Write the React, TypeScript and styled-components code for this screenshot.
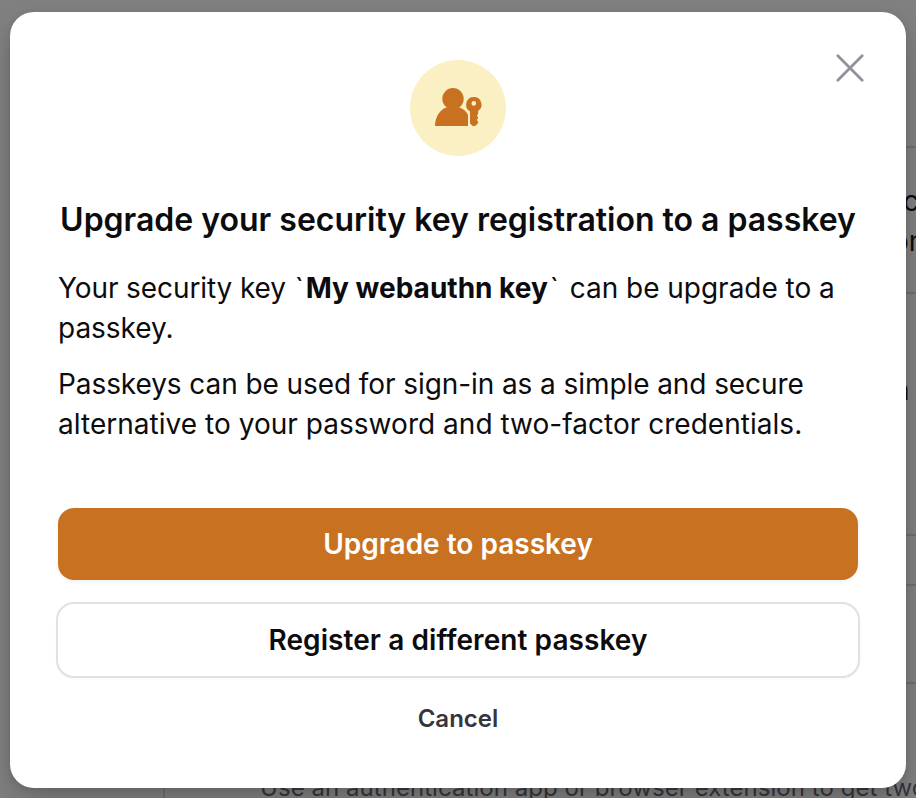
import React from "react";
import styled, { createGlobalStyle } from "styled-components";

const GlobalStyle = createGlobalStyle`
  *, *::before, *::after { box-sizing: border-box; }
  body { margin: 0; font-family: Inter, sans-serif; color: #0c0c0e; -webkit-font-smoothing: antialiased; }
`;

const Screen = styled.div`
  position: relative;
  width: 916px;
  height: 798px;
  overflow: hidden;
  background: #808080;
`;

const SettingsPage = styled.div`
  display: flex;
  flex-direction: column;
  margin-left: 163px;
`;

const SettingsRow = styled.div<{ $height: number; $inset: number }>`
  height: ${(p) => p.$height}px;
  padding-top: ${(p) => p.$inset}px;
  border-bottom: 2px solid #707070;
  display: flex;
  flex-direction: column;
`;

const RowText = styled.span<{ $start: number }>`
  height: 40px;
  margin-left: ${(p) => p.$start}px;
  font-size: 28px;
  line-height: 40px;
  white-space: nowrap;
`;

const AppRow = styled.div`
  height: 114px;
  padding: 84px 0 0 95px;
  border-left: 2px solid #707070;
`;

const AppText = styled.p`
  margin: 0;
  font-size: 24px;
  line-height: 40px;
  letter-spacing: 0.05px;
  color: #35353b;
  white-space: nowrap;
`;

const Overlay = styled.div`
  position: absolute;
  inset: 0;
  padding: 12px 10px 10px;
`;

const Dialog = styled.section`
  position: relative;
  height: 776px;
  padding: 48px;
  border-radius: 24px;
  background: #fff;
  box-shadow: 0 16px 32px rgba(0, 0, 0, 0.16), 0 2px 8px rgba(0, 0, 0, 0.12);
  display: flex;
  flex-direction: column;
`;

const CloseButton = styled.button`
  position: absolute;
  top: 40px;
  right: 40px;
  width: 32px;
  height: 32px;
  padding: 0;
  border: 0;
  background: none;
  svg { display: block; }
`;

const IconCircle = styled.div`
  align-self: center;
  width: 96px;
  height: 96px;
  border-radius: 50%;
  background: #fbf0c3;
  svg { display: block; }
`;

const Title = styled.h1`
  margin: 40px 0 0;
  font-size: 32px;
  line-height: 48px;
  font-weight: 600;
  letter-spacing: -0.01px;
  text-align: center;
  white-space: nowrap;
`;

const Body = styled.div`
  margin-top: 24px;
  display: flex;
  flex-direction: column;
  gap: 16px;
`;

const Paragraph = styled.p`
  margin: 0;
  font-size: 28px;
  line-height: 40px;
`;

const Phrase = styled.span<{ $tracking: number }>`
  letter-spacing: ${(p) => p.$tracking}px;
`;

const KeyName = styled.b`
  margin: 0 2px;
  font-weight: 700;
`;

const Quoted = styled.span`
  margin: 0 3px 0 1px;
`;

const Actions = styled.div`
  margin-top: 64px;
  display: flex;
  flex-direction: column;
`;

const Button = styled.button<{ $primary?: boolean }>`
  height: ${(p) => (p.$primary ? 72 : 76)}px;
  margin: ${(p) => (p.$primary ? "0 0 22px" : "0 -2px")};
  padding: 0;
  border: ${(p) => (p.$primary ? "0" : "2px solid #e1e1e1")};
  border-radius: ${(p) => (p.$primary ? 16 : 18)}px;
  background: ${(p) => (p.$primary ? "#c87121" : "#fff")};
  color: ${(p) => (p.$primary ? "#fff" : "#0c0c0e")};
  box-shadow: ${(p) => (p.$primary ? "0 2px 4px rgba(0, 0, 0, 0.05)" : "0 1px 2px rgba(0, 0, 0, 0.04)")};
  font: 600 28px/40px Inter, sans-serif;
  letter-spacing: ${(p) => (p.$primary ? 0 : 0.07)}px;
`;

const CancelButton = styled.button`
  align-self: center;
  margin-top: 21px;
  padding: 0;
  border: 0;
  background: none;
  color: #35353d;
  font: 600 24px/40px Inter, sans-serif;
`;

function PersonKeyIcon() {
  return (
    <svg width="96" height="96" viewBox="0 0 96 96" fill="#c87121">
      <circle cx="43" cy="38.7" r="10.7" />
      <path d="M37 47.3 C30 49.5 25 57 25 66 H58 V54.8 C56 51.2 52.8 48.5 49 47.3 Z" />
      <path
        fillRule="evenodd"
        d="M63.8 37 a7.7 7.7 0 0 1 4.3 14.1 V54 L66.9 55.7 L68.2 57.6 L67 59.9 L68.2 62.2 V63.1 L65.2 66 H62.8 L60 63.6 V51.4 A7.7 7.7 0 0 1 63.8 37 Z M63.8 41.1 a2.3 2.3 0 1 0 0 4.6 a2.3 2.3 0 1 0 0 -4.6 Z"
      />
    </svg>
  );
}

function CloseIcon() {
  return (
    <svg width="32" height="32" viewBox="0 0 32 32" fill="none" stroke="#91919b" strokeWidth="2.8" strokeLinecap="round">
      <path d="M3.8 3.8 L28.2 28.2 M28.2 3.8 L3.8 28.2" />
    </svg>
  );
}

export default function App() {
  return (
    <Screen>
      <GlobalStyle />
      <SettingsPage>
        <SettingsRow $height={148} $inset={0} />
        <SettingsRow $height={146} $inset={33}>
          <RowText $start={740}>c</RowText>
          <RowText $start={729}>on</RowText>
        </SettingsRow>
        <SettingsRow $height={242} $inset={76}>
          <RowText $start={730}>n</RowText>
        </SettingsRow>
        <SettingsRow $height={50} $inset={0} />
        <SettingsRow $height={98} $inset={0} />
        <AppRow>
          <AppText>Use an authentication app or browser extension to get two</AppText>
        </AppRow>
      </SettingsPage>
      <Overlay>
        <Dialog role="dialog" aria-modal="true">
          <CloseButton aria-label="Close">
            <CloseIcon />
          </CloseButton>
          <IconCircle>
            <PersonKeyIcon />
          </IconCircle>
          <Title>Upgrade your security key registration to a passkey</Title>
          <Body>
            <Paragraph>
              <Phrase $tracking={-0.1}>Your security key </Phrase>
              <Quoted>`<KeyName>My webauthn key</KeyName>`</Quoted>
              <Phrase $tracking={-0.02}> can be upgrade to a passkey.</Phrase>
            </Paragraph>
            <Paragraph>
              <Phrase $tracking={-0.08}>Passkeys can be used for sign-in as a simple and secure </Phrase>
              <Phrase $tracking={0.03}>alternative to your password and two-factor credentials.</Phrase>
            </Paragraph>
          </Body>
          <Actions>
            <Button $primary>Upgrade to passkey</Button>
            <Button>Register a different passkey</Button>
            <CancelButton>Cancel</CancelButton>
          </Actions>
        </Dialog>
      </Overlay>
    </Screen>
  );
}
